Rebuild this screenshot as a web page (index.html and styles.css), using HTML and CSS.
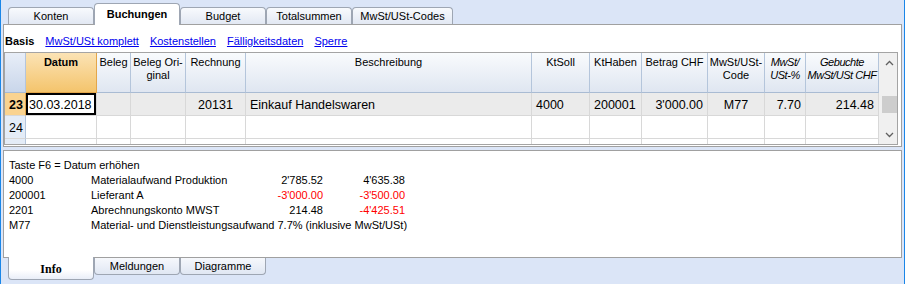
FILE: index.html
```html
<!DOCTYPE html>
<html lang="de">
<head>
  <meta charset="UTF-8">
  <title>Buchungen</title>
  <link rel="stylesheet" href="styles.css">
</head>
<body>
  <div class="window">
    <div class="tabs">
      <div class="tab">Konten</div>
      <div class="tab tab-active">Buchungen</div>
      <div class="tab">Budget</div>
      <div class="tab">Totalsummen</div>
      <div class="tab tab-wide">MwSt/USt-Codes</div>
    </div>

    <div class="panel">
      <div class="views">
        <span class="view-current">Basis</span>
        <a href="#">MwSt/USt komplett</a>
        <a href="#">Kostenstellen</a>
        <a href="#">Fälligkeitsdaten</a>
        <a href="#">Sperre</a>
      </div>

      <div class="frame">
        <div class="grid">
          <!-- header -->
          <div class="hd hd-corner"></div>
          <div class="hd hd-sel">Datum</div>
          <div class="hd">Beleg</div>
          <div class="hd">Beleg Ori-<br>ginal</div>
          <div class="hd">Rechnung</div>
          <div class="hd">Beschreibung</div>
          <div class="hd">KtSoll</div>
          <div class="hd">KtHaben</div>
          <div class="hd">Betrag CHF</div>
          <div class="hd">MwSt/USt-<br>Code</div>
          <div class="hd hd-calc">MwSt/<br>USt-%</div>
          <div class="hd hd-calc">Gebuchte<br>MwSt/USt CHF</div>

          <!-- row 23 -->
          <div class="rownum rownum-cur">23</div>
          <div class="cell cell-edit">30.03.2018</div>
          <div class="cell cell-cur"></div>
          <div class="cell cell-cur"></div>
          <div class="cell cell-cur mid">20131</div>
          <div class="cell cell-cur">Einkauf Handelswaren</div>
          <div class="cell cell-cur">4000</div>
          <div class="cell cell-cur">200001</div>
          <div class="cell cell-cur num">3'000.00</div>
          <div class="cell cell-cur mid">M77</div>
          <div class="cell cell-cur num">7.70</div>
          <div class="cell cell-cur num">214.48</div>

          <!-- row 24 -->
          <div class="rownum">24</div>
          <div class="cell"></div>
          <div class="cell"></div>
          <div class="cell"></div>
          <div class="cell"></div>
          <div class="cell"></div>
          <div class="cell"></div>
          <div class="cell"></div>
          <div class="cell"></div>
          <div class="cell"></div>
          <div class="cell"></div>
          <div class="cell"></div>

          <!-- next row, cut off by the frame -->
          <div class="rownum"></div>
          <div class="cell"></div>
          <div class="cell"></div>
          <div class="cell"></div>
          <div class="cell"></div>
          <div class="cell"></div>
          <div class="cell"></div>
          <div class="cell"></div>
          <div class="cell"></div>
          <div class="cell"></div>
          <div class="cell"></div>
          <div class="cell"></div>
        </div>

        <div class="scrollbar">
          <div class="scroll-btn">
            <svg width="9" height="6" viewBox="0 0 9 6"><polyline points="1,5 4.5,1.5 8,5" fill="none" stroke="#606060" stroke-width="1.3"/></svg>
          </div>
          <div class="scroll-thumb"></div>
          <div class="scroll-btn scroll-btn-down">
            <svg width="9" height="6" viewBox="0 0 9 6"><polyline points="1,1 4.5,4.5 8,1" fill="none" stroke="#606060" stroke-width="1.3"/></svg>
          </div>
        </div>
      </div>
    </div>

    <div class="info">
      <div class="info-line">Taste F6 = Datum erhöhen</div>
      <div class="info-row">
        <span>4000</span><span>Materialaufwand Produktion</span>
        <span class="amt">2'785.52</span><span class="amt">4'635.38</span>
      </div>
      <div class="info-row">
        <span>200001</span><span>Lieferant A</span>
        <span class="amt neg">-3'000.00</span><span class="amt neg">-3'500.00</span>
      </div>
      <div class="info-row">
        <span>2201</span><span>Abrechnungskonto MWST</span>
        <span class="amt">214.48</span><span class="amt neg">-4'425.51</span>
      </div>
      <div class="info-row">
        <span>M77</span><span class="info-wide">Material- und Dienstleistungsaufwand 7.7% (inklusive MwSt/USt)</span>
      </div>
    </div>

    <div class="tabs tabs-bottom">
      <div class="tab tab-active">Info</div>
      <div class="tab">Meldungen</div>
      <div class="tab">Diagramme</div>
    </div>
  </div>
</body>
</html>
```

FILE: styles.css
```css
body {
  margin: 0;
  background: #dbe5f7;
  font-family: "Liberation Sans", Arial, sans-serif;
  font-size: 11px;
  color: #000;
}
.window {
  width: 905px;
  height: 284px;
  box-sizing: border-box;
  border-left: 1px solid #1a86e8;
  border-right: 1px solid #1a86e8;
  padding: 0 2px;
}

/* tabs */
.tabs {
  display: flex;
  align-items: flex-end;
  height: 24px;
  padding-left: 5px;
}
.tab {
  width: 86px;
  height: 17px;
  box-sizing: border-box;
  border: 1px solid #9ea6b3;
  border-bottom: none;
  border-radius: 4px 4px 0 0;
  background: linear-gradient(#f8fafd, #e2e8f3);
  text-align: center;
  line-height: 16px;
}
.tab-wide {
  width: 101px;
}
.tab-active {
  position: relative;
  z-index: 1;
  height: 22px;
  margin-bottom: -1px;
  background: #fff;
  font-weight: bold;
  line-height: 20px;
}
.tabs-bottom {
  align-items: flex-start;
  height: auto;
}
.tabs-bottom .tab {
  border-top: none;
  border-bottom: 1px solid #9ea6b3;
  border-radius: 0 0 4px 4px;
  background: linear-gradient(#f6f8fc, #e0e7f3);
}
.tabs-bottom .tab-active {
  height: 23px;
  margin-top: -1px;
  margin-bottom: 0;
  background: linear-gradient(#fff 60%, #e9eef8);
  font-family: "Liberation Serif", "Times New Roman", serif;
  font-size: 12px;
  line-height: 24px;
}

/* main panel */
.panel {
  height: 123px;
  box-sizing: border-box;
  border: 1px solid #a0a0a0;
  background: #fff;
  padding-right: 3px;
}
.views {
  display: flex;
  gap: 11px;
  height: 27px;
  box-sizing: border-box;
  padding: 10px 0 0 1px;
  line-height: 13px;
}
.view-current {
  font-weight: bold;
}
.views a {
  color: #0000ee;
}

.frame {
  display: flex;
  height: 93px;
  box-sizing: border-box;
  border: 1px solid #a4a4a4;
  overflow: hidden;
}
.grid {
  flex: none;
  width: 874px;
  display: grid;
  grid-template-columns: 21px 71px 34px 55px 60px 286px 58px 52px 66px 57px 41px 73px;
  grid-template-rows: 40px;
  grid-auto-rows: 23px;
}
.hd {
  box-sizing: border-box;
  border-right: 1px solid #b4c5db;
  border-bottom: 1px solid #a9bbd3;
  background: linear-gradient(#f9fbfd, #dfe6f1);
  text-align: center;
  padding-top: 3px;
  line-height: 13px;
  white-space: nowrap;
}
.hd-corner {
  background: linear-gradient(#e8eef8, #c9d6ea);
}
.hd-sel {
  background: linear-gradient(#fbe3b5, #f4c46c);
  border-right-color: #e3a64a;
  border-bottom-color: #e3a64a;
  font-weight: bold;
}
.hd-calc {
  font-style: italic;
  letter-spacing: -0.45px;
}

.cell,
.rownum {
  box-sizing: border-box;
  border-right: 1px solid #d8d8d8;
  border-bottom: 1px solid #d8d8d8;
  font-size: 12.5px;
  line-height: 20px;
  padding: 2px 4px 0;
  white-space: nowrap;
  overflow: hidden;
}
.cell-cur {
  background: #ebebeb;
}
.cell-edit {
  background: #fff;
  padding-left: 3px;
  box-shadow: inset 0 0 0 2px #000;
}
.rownum {
  background: #e4ecf7;
  border-right-color: #b4c5db;
  text-align: right;
  padding-right: 4px;
}
.rownum-cur {
  background: #fad390;
  border-right-color: #e3a64a;
  font-weight: bold;
}
.num {
  text-align: right;
}
.mid {
  text-align: center;
}

.scrollbar {
  flex: 1;
  display: flex;
  flex-direction: column;
  background: #f0f0f0;
}
.scroll-btn {
  display: flex;
  align-items: center;
  justify-content: center;
  height: 20px;
  padding-left: 2px;
}
.scroll-btn-down {
  margin-top: auto;
  height: 18px;
}
.scroll-thumb {
  height: 17px;
  margin: 23px 0 0 3px;
  background: #cdcdcd;
}

/* info panel */
.info {
  height: 108px;
  box-sizing: border-box;
  margin-top: 3px;
  border: 1px solid #a0a0a0;
  background: #fff;
  padding: 7px 0 0 5px;
  line-height: 15px;
}
.info-row {
  display: grid;
  grid-template-columns: 82px 150px 82px 82px;
  white-space: nowrap;
}
.info-wide {
  grid-column: span 3;
}
.amt {
  text-align: right;
}
.neg {
  color: #f00;
}
```
